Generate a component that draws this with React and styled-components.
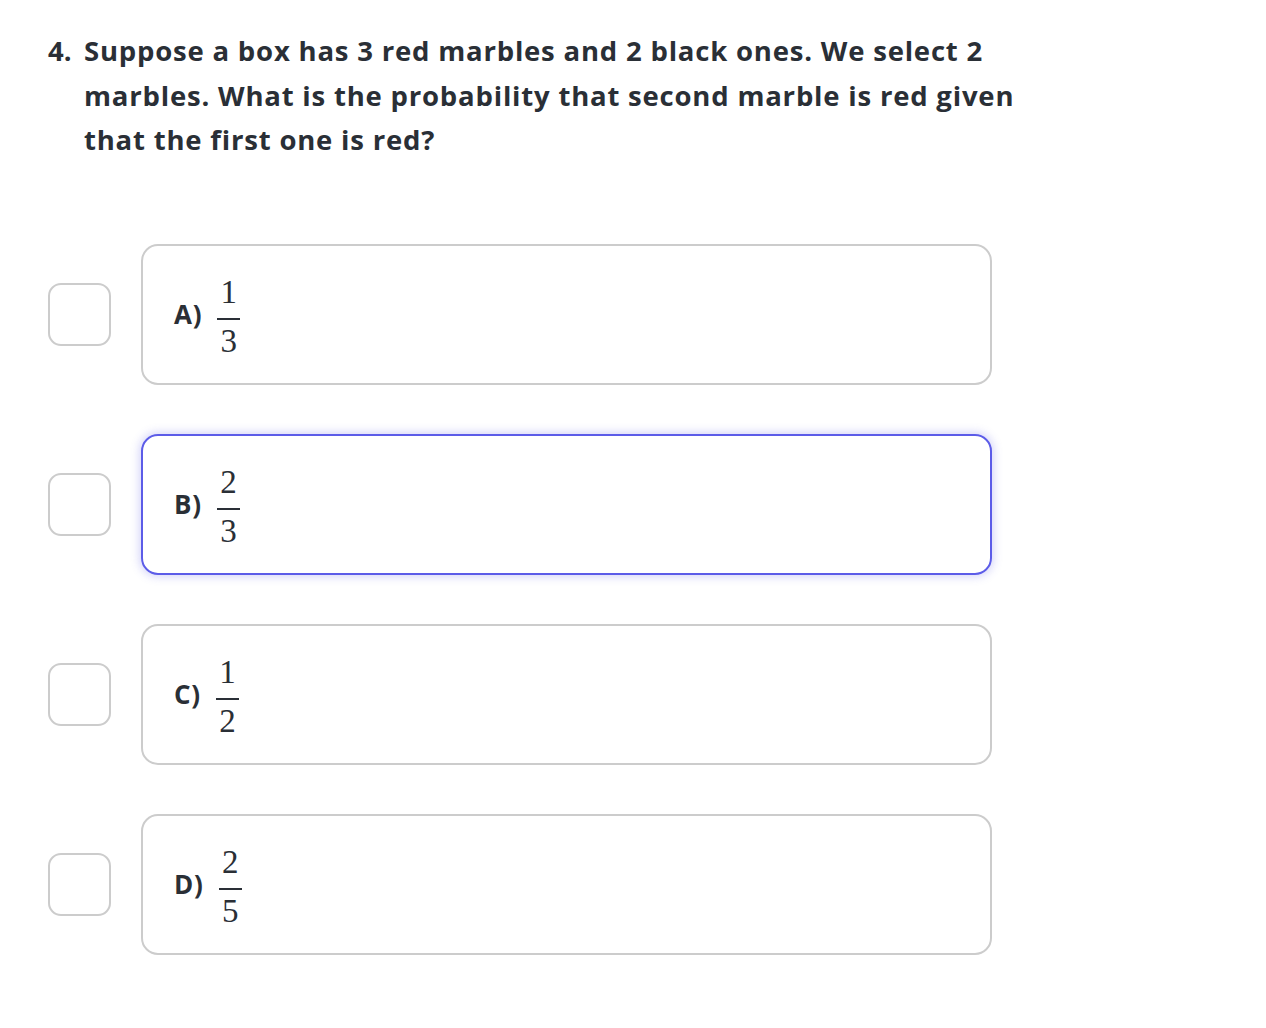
import styled, { createGlobalStyle } from 'styled-components';

const GlobalStyle = createGlobalStyle`
  body {
    margin: 0;
    background: #fff;
    font-family: "Open Sans", "Liberation Sans", sans-serif;
    color: #2a2f36;
  }
`;

const Page = styled.div`
  padding: 29px 0 40px 48px;
`;

const Question = styled.div`
  display: flex;
  font-size: 27.5px;
  font-weight: 700;
  line-height: 44.5px;
  letter-spacing: 0.8px;
`;

const Num = styled.span`
  flex: 0 0 36px;
  letter-spacing: 0;
`;

const Line = styled.span`
  display: block;
  white-space: nowrap;
`;

const Choices = styled.div`
  margin-top: 81px;
  display: flex;
  flex-direction: column;
  gap: 49px;
`;

const Row = styled.div`
  display: flex;
  align-items: center;
  gap: 30px;
`;

const Check = styled.div`
  width: 59px;
  height: 59px;
  border: 2px solid #cccccc;
  border-radius: 13px;
  box-sizing: content-box;
`;

const Card = styled.div`
  width: 851px;
  height: 141px;
  box-sizing: border-box;
  border: 2px solid ${p => (p.$active ? '#5c5ce8' : '#cccccc')};
  border-radius: 17px;
  box-shadow: ${p => (p.$active ? '0 0 8px 2px rgba(92, 92, 232, 0.25)' : 'none')};
  display: flex;
  align-items: center;
  padding-left: 31px;
  gap: 15px;
`;

const Letter = styled.span`
  font-size: 26px;
  font-weight: 700;
  letter-spacing: 0.8px;
`;

const Frac = styled.span`
  display: inline-flex;
  flex-direction: column;
  align-items: center;
  font-family: "Liberation Serif", "Times New Roman", serif;
  font-size: 33px;
  line-height: 30px;
  color: #2a2f36;
  margin-top: 5px;
`;

const Bar = styled.span`
  width: 23px;
  height: 2px;
  background: #2a2f36;
  margin: 11px 0 6px;
`;

const options = [
  { l: 'A)', n: '1', d: '3' },
  { l: 'B)', n: '2', d: '3', active: true },
  { l: 'C)', n: '1', d: '2' },
  { l: 'D)', n: '2', d: '5' },
];

export default function App() {
  return (
    <Page>
      <GlobalStyle />
      <Question>
        <Num>4.</Num>
        <span>
          <Line>Suppose a box has 3 red marbles and 2 black ones. We select 2</Line>
          <Line>marbles. What is the probability that second marble is red given</Line>
          <Line>that the first one is red?</Line>
        </span>
      </Question>
      <Choices>
        {options.map(o => (
          <Row key={o.l}>
            <Check />
            <Card $active={o.active}>
              <Letter>{o.l}</Letter>
              <Frac>
                <span>{o.n}</span>
                <Bar />
                <span>{o.d}</span>
              </Frac>
            </Card>
          </Row>
        ))}
      </Choices>
    </Page>
  );
}
